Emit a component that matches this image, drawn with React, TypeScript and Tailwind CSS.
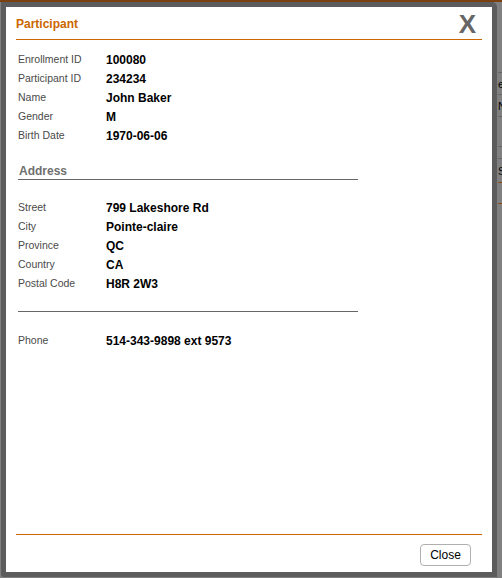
import React from 'react'

const person = [
  { label: 'Enrollment ID', value: '100080' },
  { label: 'Participant ID', value: '234234' },
  { label: 'Name', value: 'John Baker' },
  { label: 'Gender', value: 'M' },
  { label: 'Birth Date', value: '1970-06-06' },
]

const address = [
  { label: 'Street', value: '799 Lakeshore Rd' },
  { label: 'City', value: 'Pointe-claire' },
  { label: 'Province', value: 'QC' },
  { label: 'Country', value: 'CA' },
  { label: 'Postal Code', value: 'H8R 2W3' },
]

const Row: React.FC<{ label: string; value: string }> = ({ label, value }) => (
  <div className='flex items-center h-[19px]'>
    <span className='w-[88px] text-[10.5px] text-[#4a4a4a]'>{label}</span>
    <span className='text-[12px] font-bold text-black'>{value}</span>
  </div>
)

const App: React.FC = () => {
  return (
    <div
      className='relative w-[502px] h-[578px] overflow-hidden bg-[#808080]'
      style={{ fontFamily: '"Liberation Sans", Arial, sans-serif' }}
    >
      {/* page behind the overlay */}
      <div className='h-[2px] bg-[#7a4010]' />
      <div className='absolute left-[498px] top-[50px] w-[10px] flex flex-col text-[11px] text-black'>
        <div className='h-[23px] border-b border-[#666]' />
        <div className='h-[22px] leading-[22px] border-b border-[#666]'>e</div>
        <div className='h-[22px] leading-[22px] border-b border-[#666]'>N</div>
        <div className='h-[30px] border-b border-[#666]' />
        <div className='h-[12px] border-b border-[#666]' />
        <div className='h-[24px] leading-[24px] border-b border-[#8a4a10]'>S</div>
        <div className='h-[21px] border-b border-[#8a4a10]' />
      </div>

      {/* modal */}
      <div className='absolute left-[1px] top-[2px] w-[496px] h-[575px] border-[5px] border-[#5c5c5c] rounded-tr-[5px] rounded-bl-[3px] bg-white flex flex-col px-[10px]'>
        <div className='h-[33px] shrink-0 flex items-center justify-between border-b border-[#cc6600]'>
          <span className='text-[12px] font-bold text-[#cc6600] mt-[2px]'>Participant</span>
          <span className='text-[26px] font-bold leading-none text-[#666] mr-[6px] mt-[1px]'>X</span>
        </div>

        <div className='flex-1 pl-[2px] pt-[10px]'>
          {person.map((r) => (
            <Row key={r.label} {...r} />
          ))}

          <div className='w-[340px] mt-[19px] border-b border-[#666] h-[16px] flex items-end'>
            <span className='text-[12px] font-bold text-[#707070] pl-[1px] leading-[15px]'>Address</span>
          </div>

          <div className='pt-[18px]'>
            {address.map((r) => (
              <Row key={r.label} {...r} />
            ))}
          </div>

          <div className='w-[340px] mt-[18px] border-b border-[#666]' />

          <div className='pt-[19px]'>
            <Row label='Phone' value='514-343-9898 ext 9573' />
          </div>
        </div>

        <div className='h-[38px] shrink-0 border-t border-[#cc6600] flex items-start justify-end pt-[9px]'>
          <button
            type='button'
            className='w-[51px] h-[22px] mr-[11px] rounded-[4px] border border-[#b0b0b0] bg-white text-[12px] text-black'
          >
            Close
          </button>
        </div>
      </div>
    </div>
  )
}

export default App
